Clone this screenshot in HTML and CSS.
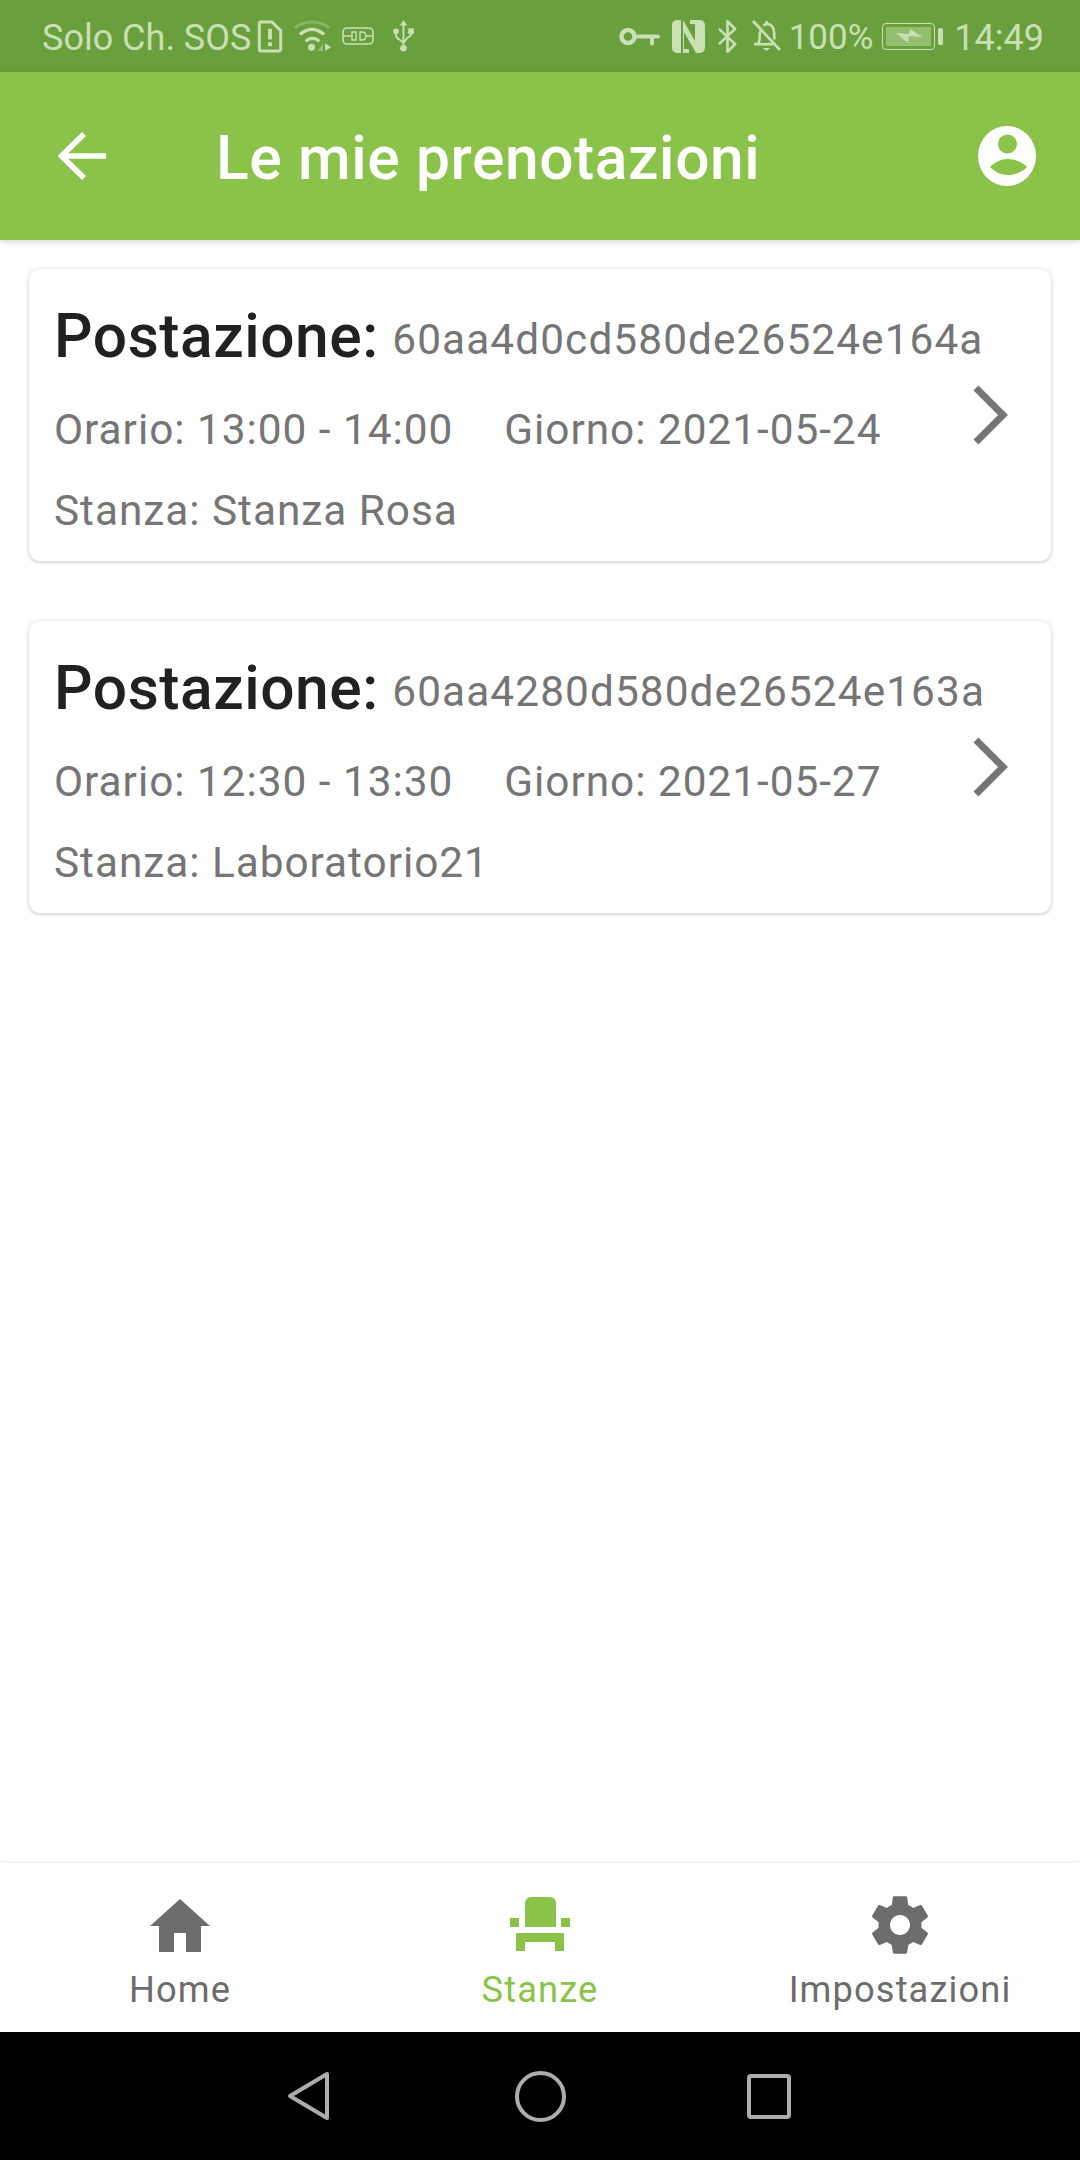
FILE: index.html
```html
<!DOCTYPE html>
<html lang="en">
<head>
    <meta charset="UTF-8">
    <meta name="viewport" content="width=device-width, initial-scale=1.0">
    <title>Le mie prenotazioni</title>
    <link rel="stylesheet" href="styles.css">
</head>
<body>
    <div class="status-bar">
        <div class="status-left">
            <span class="carrier">Solo Ch. SOS</span>
            <svg class="st-sim" viewBox="0 0 26 34"><path d="M3 2h12l9 9v19a2 2 0 0 1-2 2H4a2 2 0 0 1-2-2V3z" fill="none" stroke="currentColor" stroke-width="3"/><rect x="11" y="9" width="4" height="11" fill="currentColor"/><rect x="11" y="23" width="4" height="4" fill="currentColor"/></svg>
            <svg class="st-wifi" viewBox="0 0 40 33"><path d="M2 8C12 0 27 0 37 8" fill="none" stroke="currentColor" stroke-width="3" opacity=".35"/><path d="M7 15c8-7 17-7 25 0M13 22c4-4 10-4 14 0" fill="none" stroke="currentColor" stroke-width="3.500"/><circle cx="19" cy="28" r="3.600" fill="currentColor"/><path d="M31 24v8h-6z" fill="currentColor" opacity=".45"/><path d="M33 24v8l6-4z" fill="currentColor"/></svg>
            <svg class="st-vowifi" viewBox="0 0 32 18"><rect x="1" y="1" width="30" height="16" rx="4" fill="none" stroke="currentColor" stroke-width="1.600"/><path d="M1 9h8M23 9h8M14 5h-4v8h4zM18 5h2c5 0 5 8 0 8h-2z" fill="none" stroke="currentColor" stroke-width="1.400"/></svg>
            <svg class="st-usb" viewBox="0 0 24 36"><path d="M12 1l4 6h-3v21h-2V7H8z" fill="currentColor"/><circle cx="12" cy="31" r="3.500" fill="currentColor"/><path d="M4 13v4c0 3 2 4 4 5l4 3 4-5c2-1 4-2 4-4v-3" fill="none" stroke="currentColor" stroke-width="2"/><circle cx="4" cy="13" r="3" fill="currentColor"/><rect x="17" y="10" width="6" height="6" fill="currentColor"/></svg>
        </div>
        <div class="status-right">
            <svg class="st-key" viewBox="0 0 41 19"><circle cx="9" cy="9.500" r="6.500" fill="none" stroke="currentColor" stroke-width="4.500"/><path d="M15 7.500h24a2 2 0 0 1 0 4h-4v5a2 2 0 0 1-4 0v-5H15z" fill="currentColor"/></svg>
            <svg class="st-nfc" viewBox="0 0 33 33"><path d="M9 0H5a5 5 0 0 0-5 5v23a5 5 0 0 0 5 5h4zM11 0l12 21V4h-5V0h10a5 5 0 0 1 5 5v23a5 5 0 0 1-5 5h-4L12 12v17h5v4H11z" fill="currentColor"/></svg>
            <svg class="st-bt" viewBox="0 0 22 34"><path d="M2 9l17 16-8 8V1l8 8L2 25" fill="none" stroke="currentColor" stroke-width="2.800" stroke-linejoin="round"/></svg>
            <svg class="st-bell" viewBox="0 0 30 33"><path d="M2 25h4c2-2 2-5 2-10 0-2 .5-3 1.500-5M12 6c1-1 2-2 3-2V1m0 3c5 0 8 4 8 10v6" fill="none" stroke="currentColor" stroke-width="2.800"/><path d="M6 25h16" stroke="currentColor" stroke-width="2.800"/><path d="M1 1l28 30" stroke="currentColor" stroke-width="2.800"/><path d="M11 29h8l-4 3z" fill="currentColor"/></svg>
            <span class="batt-pct">100%</span>
            <div class="battery">
                <div class="batt-body">
                    <div class="batt-fill"><svg class="st-bolt" viewBox="0 0 26 14"><path d="M0 4l13 1 1-5 12 8-13-1-1 7z" fill="currentColor"/></svg></div>
                </div>
                <div class="batt-cap"></div>
            </div>
            <span class="clock">14:49</span>
        </div>
    </div>

    <header class="app-bar">
        <svg class="back-icon" viewBox="0 0 48 48"><path d="M48 24H3M26 2L3.500 24 26 46" fill="none" stroke="#fff" stroke-width="5.500"/></svg>
        <h1 class="app-title">Le mie prenotazioni</h1>
        <svg class="account-icon" viewBox="0 0 58 60"><ellipse cx="29" cy="30" rx="29" ry="30" fill="#fff"/><circle cx="29.500" cy="18" r="9.500" fill="#8bc34a"/><path d="M12 41c5-5 11-8 18-8s14 3 19 8c-5 5-12 8-19 8s-13-3-18-8z" fill="#8bc34a"/></svg>
    </header>

    <main class="list">
        <article class="card">
            <div class="card-text">
                <p class="card-title"><strong>Postazione:</strong> <span class="card-id">60aa4d0cd580de26524e164a</span></p>
                <p class="card-line"><span class="orario">Orario: 13:00 - 14:00</span><span>Giorno: 2021-05-24</span></p>
                <p class="card-line">Stanza: Stanza Rosa</p>
            </div>
            <svg class="chevron" viewBox="0 0 36 60"><path d="M4 3l27 27L4 57" fill="none" stroke="#757575" stroke-width="7"/></svg>
        </article>
        <article class="card">
            <div class="card-text">
                <p class="card-title"><strong>Postazione:</strong> <span class="card-id">60aa4280d580de26524e163a</span></p>
                <p class="card-line"><span class="orario">Orario: 12:30 - 13:30</span><span>Giorno: 2021-05-27</span></p>
                <p class="card-line">Stanza: Laboratorio21</p>
            </div>
            <svg class="chevron" viewBox="0 0 36 60"><path d="M4 3l27 27L4 57" fill="none" stroke="#757575" stroke-width="7"/></svg>
        </article>
    </main>

    <nav class="bottom-nav">
        <div class="nav-item">
            <svg class="nav-icon" viewBox="0 0 66 66"><path d="M27 60V41h12v19h15V34h9L33 7 3 34h9v26z" fill="currentColor"/></svg>
            <span>Home</span>
        </div>
        <div class="nav-item active">
            <svg class="nav-icon" viewBox="0 0 66 66"><path d="M24 5h19a6 6 0 0 1 6 6v24H18V11a6 6 0 0 1 6-6zM3 26h9v9H3zM54 26h9v9h-9zM9 41h48v18h-9v-9H18v9H9z" fill="currentColor"/></svg>
            <span>Stanze</span>
        </div>
        <div class="nav-item">
            <svg class="nav-icon" viewBox="0.500 0.500 23 23"><path d="M19.430 12.980c.04-.32.07-.64.07-.98s-.03-.66-.07-.98l2.110-1.650c.19-.15.24-.42.12-.64l-2-3.460c-.12-.22-.39-.3-.61-.22l-2.490 1c-.52-.4-1.080-.73-1.690-.98l-.38-2.650A.49.49 0 0 0 14 2h-4c-.25 0-.46.18-.49.42l-.38 2.650c-.61.25-1.170.59-1.690.98l-2.490-1c-.23-.09-.49 0-.61.22l-2 3.460c-.13.22-.07.49.12.64l2.110 1.650c-.04.32-.07.65-.07.98s.03.66.07.98l-2.110 1.650c-.19.15-.24.42-.12.64l2 3.460c.12.22.39.3.61.22l2.490-1c.52.4 1.080.73 1.690.98l.38 2.650c.03.24.24.42.49.42h4c.25 0 .46-.18.49-.42l.38-2.650c.61-.25 1.170-.59 1.690-.98l2.490 1c.23.09.49 0 .61-.22l2-3.460c.12-.22.07-.49-.12-.64l-2.110-1.650zM12 15.500c-1.930 0-3.500-1.570-3.500-3.500s1.570-3.500 3.500-3.500 3.500 1.570 3.500 3.500-1.570 3.500-3.500 3.500z" fill="currentColor"/></svg>
            <span>Impostazioni</span>
        </div>
    </nav>

    <div class="system-nav">
        <svg class="sys-back" viewBox="0 0 43 50"><path d="M40 3v44L3 25z" fill="none" stroke="#adadad" stroke-width="4" stroke-linejoin="round"/></svg>
        <div class="sys-home"></div>
        <div class="sys-recent"></div>
    </div>
</body>
</html>
```

FILE: styles.css
```css
* {
    box-sizing: border-box;
}

html,
body {
    margin: 0;
    height: 2160px;
}

body {
    display: flex;
    flex-direction: column;
    font-family: 'Roboto', sans-serif;
    background: #fff;
    overflow: hidden;
}

svg {
    display: block;
    flex-shrink: 0;
}

/* status bar */
.status-bar {
    height: 72px;
    display: flex;
    justify-content: space-between;
    align-items: center;
    padding: 0 36px 0 42px;
    background: #699f3c;
    color: #c9e0b4;
    font-size: 36px;
}

.status-left,
.status-right {
    display: flex;
    align-items: center;
}

.carrier,
.batt-pct,
.clock {
    padding-top: 3px;
}

.st-sim {
    width: 26px;
    height: 33px;
    margin-left: 6px;
}

.st-wifi {
    width: 39px;
    height: 32px;
    margin-left: 10px;
}

.st-vowifi {
    width: 32px;
    height: 18px;
    margin-left: 10px;
}

.st-usb {
    width: 23px;
    height: 34px;
    margin-left: 18px;
}

.st-key {
    width: 41px;
    height: 19px;
}

.st-nfc {
    width: 33px;
    height: 33px;
    margin-left: 12px;
}

.st-bt {
    width: 21px;
    height: 33px;
    margin-left: 12px;
}

.st-bell {
    width: 29px;
    height: 32px;
    margin-left: 14px;
}

.batt-pct {
    margin-left: 8px;
    font-size: 35px;
}

.battery {
    display: flex;
    align-items: center;
    margin-left: 9px;
}

.batt-body {
    width: 53px;
    height: 27px;
    padding: 3px;
    border: 1.500px solid #c9e0b4;
    border-radius: 4px;
}

.batt-fill {
    height: 100%;
    display: flex;
    align-items: center;
    justify-content: center;
    background: #93bf6f;
    border-radius: 1px;
}

.st-bolt {
    width: 26px;
    height: 14px;
}

.batt-cap {
    width: 5px;
    height: 17px;
    margin-left: 3px;
    background: #c9e0b4;
    border-radius: 2px;
}

.clock {
    margin-left: 11px;
}

/* app bar */
.app-bar {
    height: 168px;
    display: flex;
    align-items: center;
    padding: 0 44px 0 58px;
    background: #8bc34a;
    box-shadow: 0 2px 6px rgba(0, 0, 0, 0.16);
    position: relative;
}

.back-icon {
    width: 48px;
    height: 48px;
}

.app-title {
    flex: 1;
    margin: 0 0 0 110px;
    padding-top: 5px;
    color: #fff;
    font-size: 60.500px;
    font-weight: 500;
    letter-spacing: 0.600px;
    line-height: 64px;
}

.account-icon {
    width: 58px;
    height: 60px;
}

/* bookings */
.list {
    flex: 1;
    display: flex;
    flex-direction: column;
    gap: 60px;
    padding: 29px 29px 0;
}

.card {
    height: 292px;
    display: flex;
    align-items: center;
    padding: 0 43px 0 25px;
    background: #fff;
    border-radius: 11px;
    box-shadow: 0 1px 4px rgba(0, 0, 0, 0.24);
}

.card-text {
    flex: 1;
    min-width: 0;
    align-self: flex-start;
    padding-top: 36px;
}

.card p {
    margin: 0;
    white-space: nowrap;
}

.card-title {
    color: #212121;
    font-size: 60.500px;
    letter-spacing: 0.550px;
    line-height: 64px;
}

.card-title strong {
    font-weight: 500;
}

.card-id {
    margin-left: -2px;
    color: #757575;
    font-size: 42.350px;
    letter-spacing: 1.100px;
    line-height: 1;
    vertical-align: 3px;
}

.card p.card-line {
    margin-top: 36px;
    color: #757575;
    font-size: 42.350px;
    letter-spacing: 0.970px;
    line-height: 45px;
}

.card p.card-title + .card-line {
    margin-top: 38px;
}

.orario {
    margin-right: 51px;
}

.chevron {
    width: 36px;
    height: 60px;
}

/* bottom navigation */
.bottom-nav {
    height: 169px;
    display: flex;
    background: #fff;
    box-shadow: 0 -1px 4px rgba(0, 0, 0, 0.1);
    position: relative;
}

.nav-item {
    flex: 1;
    display: flex;
    flex-direction: column;
    align-items: center;
    padding-top: 29px;
    color: #6c6c6c;
    font-size: 36.300px;
    letter-spacing: 1.100px;
    line-height: 42px;
}

.nav-item.active {
    color: #8bc34a;
}

.nav-icon {
    width: 66px;
    height: 66px;
    margin-bottom: 11px;
}

/* android buttons */
.system-nav {
    height: 128px;
    display: flex;
    align-items: center;
    padding: 0 0 0 287px;
    background: #000;
}

.sys-back {
    width: 43px;
    height: 50px;
}

.sys-home {
    width: 51px;
    height: 51px;
    margin-left: 185px;
    border: 4px solid #adadad;
    border-radius: 50%;
}

.sys-recent {
    width: 44px;
    height: 45px;
    margin-left: 181px;
    border: 4px solid #adadad;
    border-radius: 4px;
}
```
